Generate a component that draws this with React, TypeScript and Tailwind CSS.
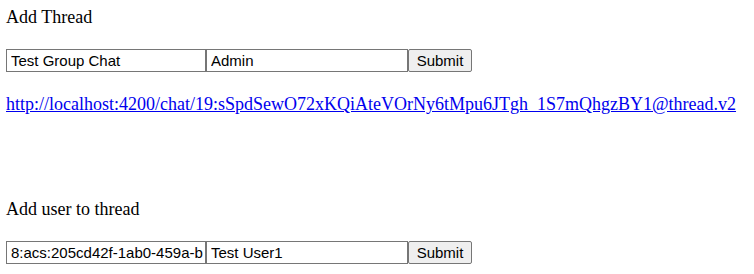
export default function App() {
  return (
    <div className="min-h-[274px] bg-white px-[6px] pt-[7px] font-['Liberation_Serif',serif] text-[18px] leading-[20px] text-black">
      {/* Add thread */}
      <div>Add Thread</div>
      <div className="mt-[22px] flex font-['Liberation_Sans',Arial,sans-serif] text-[15px]">
        <input
          className="h-[23px] w-[200px] border border-[#767676] pl-[4px] pr-[1px] outline-none"
          defaultValue="Test Group Chat"
        />
        <input
          className="h-[23px] w-[202px] border border-[#767676] pl-[4px] pr-[1px] outline-none"
          defaultValue="Admin"
        />
        <button className="h-[23px] w-[64px] rounded-[2px] border border-[#767676] bg-[#efefef] text-center">
          Submit
        </button>
      </div>
      <div className="mt-[22px] whitespace-nowrap">
        <a
          href="#"
          className="text-[#0000ee] underline"
        >
          http://localhost:4200/chat/19:sSpdSewO72xKQiAteVOrNy6tMpu6JTgh_1S7mQhgzBY1@thread.v2
        </a>
      </div>

      {/* Add user */}
      <div className="mt-[85px]">Add user to thread</div>
      <div className="mt-[22px] flex font-['Liberation_Sans',Arial,sans-serif] text-[15px]">
        <input
          className="h-[23px] w-[200px] border border-[#767676] pl-[4px] pr-[1px] outline-none"
          defaultValue="8:acs:205cd42f-1ab0-459a-b"
        />
        <input
          className="h-[23px] w-[202px] border border-[#767676] pl-[4px] pr-[1px] outline-none"
          defaultValue="Test User1"
        />
        <button className="h-[23px] w-[64px] rounded-[2px] border border-[#767676] bg-[#efefef] text-center">
          Submit
        </button>
      </div>
    </div>
  );
}
